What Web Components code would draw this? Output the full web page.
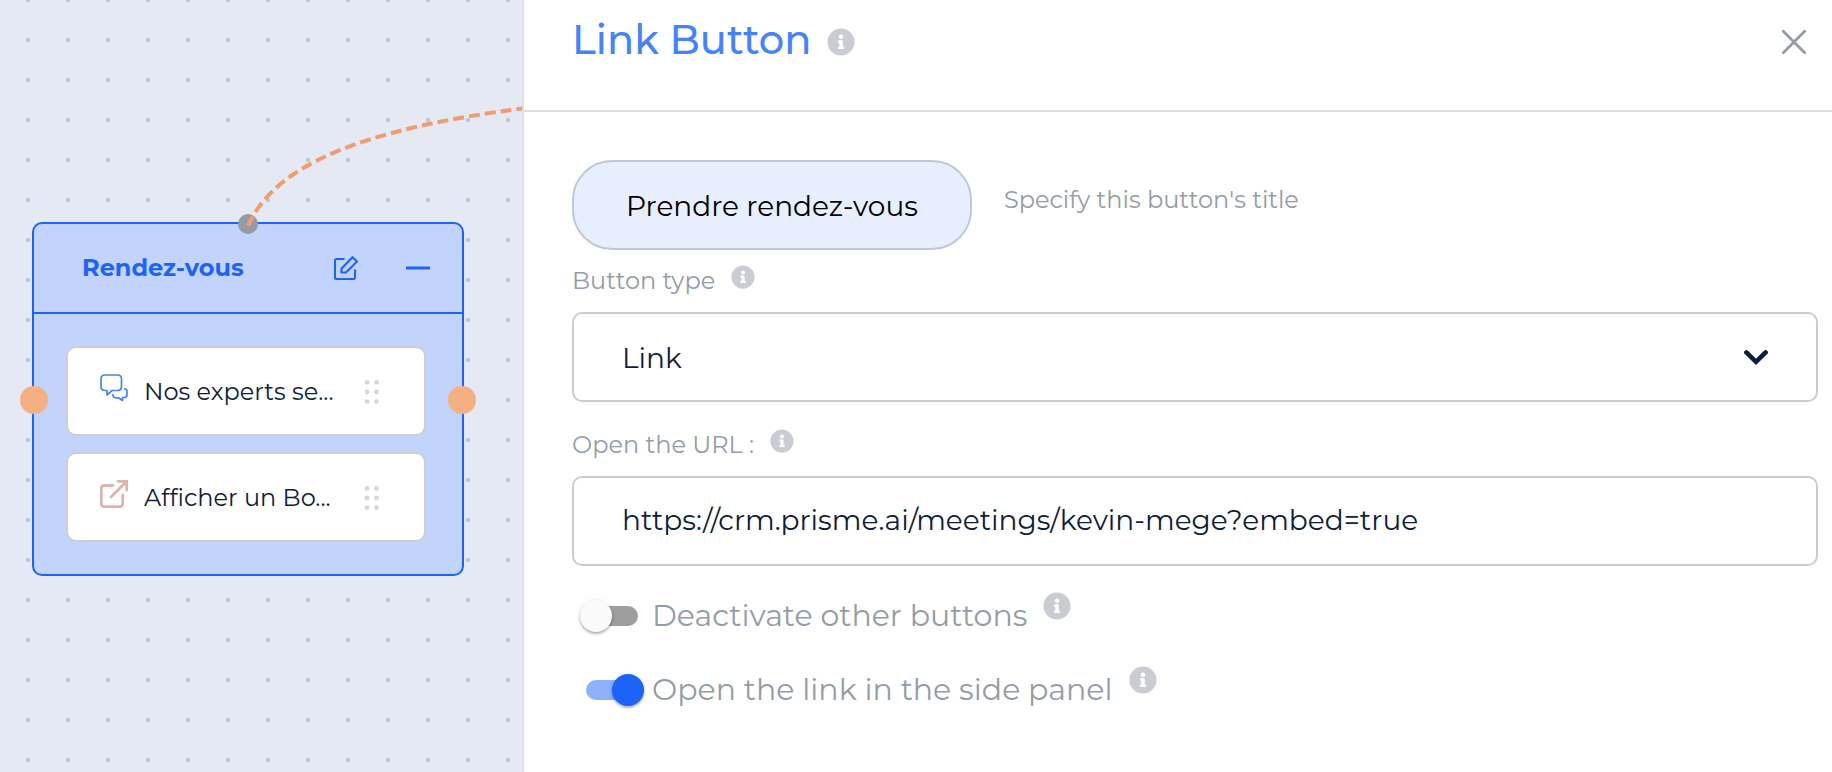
<!DOCTYPE html>
<html lang="en">
<head>
<meta charset="utf-8">
<title>Link Button</title>
<style>
  body { margin: 0; background: #fff; color: #0f1d3a; font-family: Montserrat, Inter, "Noto Sans", sans-serif; }
</style>
</head>
<body>
<flow-editor></flow-editor>

<template id="flow-editor">
  <style>
    :host { display: grid; grid-template-columns: 524px minmax(0, 1fr); min-height: 100vh; }
  </style>
  <flow-canvas>
    <flow-node heading="Rendez-vous">
      <flow-step icon="chat">Nos experts se...</flow-step>
      <flow-step icon="external">Afficher un Bo...</flow-step>
    </flow-node>
  </flow-canvas>
  <settings-panel></settings-panel>
</template>

<template id="flow-canvas">
  <style>
    :host {
      display: block; position: relative; overflow: hidden; box-sizing: border-box;
      border-right: 2px solid #dddfe5;
      background: #e4e9f3 radial-gradient(circle, #bdc2ce 1.5px, transparent 2.5px) 8px -20px / 40px 40px;
    }
    ::slotted(flow-node) { position: absolute; left: 32px; top: 222px; }
    svg { position: absolute; left: 0; top: 0; pointer-events: none; }
  </style>
  <slot></slot>
  <svg width="524" height="300" fill="none" aria-hidden="true">
    <path d="M248 226C274 166 360 129 526 108" stroke="#f19b70" stroke-width="4" stroke-dasharray="11 5"/>
  </svg>
</template>

<template id="flow-node">
  <style>
    :host { display: block; box-sizing: border-box; width: 432px; border: 2px solid #1d63f8; border-radius: 10px; background: #c2d4fc; }
    header { display: flex; align-items: center; height: 88px; padding: 0 32px 0 48px; border-bottom: 2px solid #1d63f8; color: #1d63f8; }
    h2 { flex: 1; margin: 0; font-size: 24px; line-height: 32px; font-weight: 700; }
    button { display: flex; margin: 0; padding: 0; border: 0; background: none; color: inherit; }
    button + button { margin-left: 48px; }
    .steps { display: grid; gap: 16px; padding: 32px 36px 32px 32px; }
    .port { position: absolute; width: 28px; height: 28px; border-radius: 50%; background: #f4af82; top: 162px; }
    .left { left: -14px; }
    .right { right: -14px; }
    .top { width: 20px; height: 20px; top: -10px; left: 204px; background: #949ba6; }
  </style>
  <header>
    <h2></h2>
    <button type="button" aria-label="Edit"><ui-icon name="edit" size="24"></ui-icon></button>
    <button type="button" aria-label="Collapse"><ui-icon name="minus" size="24"></ui-icon></button>
  </header>
  <div class="steps"><slot></slot></div>
  <span class="port top"></span>
  <span class="port left"></span>
  <span class="port right"></span>
</template>

<template id="flow-step">
  <style>
    :host { display: flex; align-items: center; box-sizing: border-box; height: 90px; padding: 2px 44px 0 32px; border: 2px solid #cccfd3; border-radius: 10px; background: #fff; }
    .icon { margin-bottom: 8px; }
    .text { flex: 1; margin-left: 16px; font-size: 24px; line-height: 32px; white-space: nowrap; font-variant-ligatures: none; }
  </style>
  <ui-icon class="icon" size="28"></ui-icon>
  <span class="text"><slot></slot></span>
  <ui-icon name="grip" size="24"></ui-icon>
</template>

<template id="settings-panel">
  <style>
    :host { display: block; background: #fff; }
    header { display: flex; align-items: center; height: 84px; padding: 0 26px 26px 48px; border-bottom: 2px solid #dcdee4; }
    h1 { margin: 0 16px 0 0; padding-bottom: 4px; color: #4583fb; font-size: 40px; line-height: 48px; font-weight: 500; }
    .close { display: flex; margin: 0 0 0 auto; padding: 0; border: 0; background: none; color: #929ba7; }
    form { padding: 48px 14px 48px 48px; }
    .title { display: flex; align-items: center; }
    .title label { margin: 0 0 10px 32px; font-size: 24px; line-height: 32px; color: #949ca8; }
    input, select { display: block; box-sizing: border-box; height: 90px; margin: 0; font: 400 28px/36px Montserrat, Inter, "Noto Sans", sans-serif; }
    .title input { width: 400px; padding: 2px 48px 0; border: 2px solid #c0c8d6; border-radius: 40px; background: #e7effe; color: #000; text-align: center; }
    .box { width: 100%; padding: 0 48px; border: 2px solid #c9cdd3; border-radius: 10px; background: #fff; color: #0f1d3a; appearance: none; }
    select.box { padding-top: 2px; }
    input.box { padding-bottom: 2px; }
    form-field { margin-top: 15px; }
    form-field + form-field { margin-top: 27px; }
    toggle-row { margin-top: 26px; }
    .select { position: relative; }
    .select ui-icon { position: absolute; right: 50px; top: 34px; color: #0f1d3a; pointer-events: none; }
  </style>
  <header>
    <h1>Link Button</h1>
    <ui-icon name="info" size="28"></ui-icon>
    <button class="close" type="button" aria-label="Close"><ui-icon name="close" size="24"></ui-icon></button>
  </header>
  <form>
    <div class="title">
      <input id="title" type="text" value="Prendre rendez-vous">
      <label for="title">Specify this button's title</label>
    </div>
    <form-field>
      <label slot="label" for="type">Button type</label>
      <div class="select">
        <select id="type" class="box"><option>Link</option></select>
        <ui-icon name="chevron" size="24"></ui-icon>
      </div>
    </form-field>
    <form-field>
      <label slot="label" for="url">Open the URL :</label>
      <input id="url" class="box" type="text" value="https://crm.prisme.ai/meetings/kevin-mege?embed=true">
    </form-field>
    <toggle-row label="Deactivate other buttons"></toggle-row>
    <toggle-row label="Open the link in the side panel" checked></toggle-row>
  </form>
</template>

<template id="form-field">
  <style>
    :host { display: block; }
    .label { display: flex; align-items: flex-start; gap: 16px; margin-bottom: 15px; font-size: 24px; line-height: 32px; color: #949ca8; }
  </style>
  <div class="label"><slot name="label"></slot><ui-icon name="info" size="24"></ui-icon></div>
  <slot></slot>
</template>

<template id="toggle-row">
  <style>
    :host { display: flex; align-items: flex-start; gap: 16px; }
    label { display: flex; align-items: center; gap: 8px; padding-left: 8px; font-size: 30px; line-height: 48px; color: #949ca8; }
    input { appearance: none; position: relative; width: 64px; height: 32px; margin: 0; }
    input::before { content: ""; position: absolute; left: 6px; top: 6px; width: 52px; height: 20px; border-radius: 10px; background: #9e9e9e; }
    input::after { content: ""; position: absolute; left: 0; top: 0; width: 32px; height: 32px; border-radius: 50%; background: #fafafa; box-shadow: 0 2px 2px rgba(0,0,0,.2), 0 1px 4px rgba(0,0,0,.18); }
    input:checked::before { background: #8fb0fb; }
    input:checked::after { left: 32px; background: #1d63f8; }
  </style>
  <label><input type="checkbox"><span></span></label>
  <ui-icon name="info" size="28"></ui-icon>
</template>

<script>
  const ICONS = {
    info: ['0 0 512 512', '<path fill="#c9ccd2" d="M256 8C119.043 8 8 119.083 8 256c0 136.997 111.043 248 248 248s248-111.003 248-248C504 119.083 392.957 8 256 8zm0 110c23.196 0 42 18.804 42 42s-18.804 42-42 42-42-18.804-42-42 18.804-42 42-42zm56 254c0 6.627-5.373 12-12 12h-88c-6.627 0-12-5.373-12-12v-24c0-6.627 5.373-12 12-12h12v-64h-12c-6.627 0-12-5.373-12-12v-24c0-6.627 5.373-12 12-12h64c6.627 0 12 5.373 12 12v100h12c6.627 0 12 5.373 12 12v24z"/>'],
    close: ['0 0 24 24', '<path d="M1.3 1.3l21.4 21.4M22.7 1.3L1.3 22.7" stroke="currentColor" stroke-width="2.8" stroke-linecap="round"/>'],
    chevron: ['0 0 24 24', '<path d="M2.4 6.4l9.6 9.4 9.6-9.4" stroke="currentColor" stroke-width="4.6" stroke-linecap="round" stroke-linejoin="miter"/>'],
    minus: ['0 0 24 24', '<path d="M0 12h24" stroke="currentColor" stroke-width="3"/>'],
    edit: ['0 0 24 24', '<path d="M10.5 3H2.5Q1 3 1 4.500V21.500Q1 23 2.500 23H19.500Q21 23 21 21.500V13.500M7.500 16.500V12.500L18.500 1.200L23 5.600L12 16.500Z" stroke="currentColor" stroke-width="2.100" stroke-linejoin="round"/>'],
    chat: ['0 0 28 28', '<path d="M5 1H17.500Q21.500 1 21.500 5V12.500Q21.500 16.500 17.500 16.500H12L7 21V16.500H5Q1 16.500 1 12.500V5Q1 1 5 1ZM24 14.500Q27 14.800 27 17.500V20.500Q27 23.500 24.500 23.500H22.500V26.500L18.500 23.800H16Q12.800 23.800 12.800 20" stroke="#4583f5" stroke-width="1.7" stroke-linejoin="round"/>'],
    external: ['0 0 28 28', '<path d="M13 5.500H4.500Q1.300 5.500 1.300 8.500V23.500Q1.300 26.700 4.500 26.700H19.500Q22.700 26.700 22.700 23.500V15M11 17L26.500 1.500M18 1.300H26.700V10" stroke="#dfb3ae" stroke-width="2.8" stroke-linecap="round" stroke-linejoin="miter"/>'],
    grip: ['0 0 24 24', '<g fill="#d6d6d6"><circle cx="11" cy="2.400" r="2.400"/><circle cx="20.500" cy="2.400" r="2.400"/><circle cx="11" cy="12" r="2.400"/><circle cx="20.500" cy="12" r="2.400"/><circle cx="11" cy="21.600" r="2.400"/><circle cx="20.500" cy="21.600" r="2.400"/></g>']
  };

  class TemplateElement extends HTMLElement {
    constructor() {
      super();
      const template = document.getElementById(this.localName);
      this.attachShadow({ mode: 'open' }).append(template.content.cloneNode(true));
    }
  }

  customElements.define('ui-icon', class extends HTMLElement {
    constructor() { super(); this.attachShadow({ mode: 'open' }); }
    static get observedAttributes() { return ['name']; }
    connectedCallback() { this.draw(); }
    attributeChangedCallback() { this.draw(); }
    draw() {
      const icon = ICONS[this.getAttribute('name')];
      if (!icon) return;
      const size = this.getAttribute('size');
      this.shadowRoot.innerHTML = `<style>:host { display: block; flex: none; } svg { display: block; }</style>
        <svg width="${size}" height="${size}" viewBox="${icon[0]}" fill="none" aria-hidden="true">${icon[1]}</svg>`;
    }
  });
  customElements.define('flow-step', class extends TemplateElement {
    connectedCallback() { this.shadowRoot.querySelector('.icon').setAttribute('name', this.getAttribute('icon')); }
  });
  customElements.define('flow-node', class extends TemplateElement {
    connectedCallback() { this.shadowRoot.querySelector('h2').textContent = this.getAttribute('heading'); }
  });
  customElements.define('flow-canvas', class extends TemplateElement {});
  customElements.define('form-field', class extends TemplateElement {});
  customElements.define('toggle-row', class extends TemplateElement {
    connectedCallback() {
      this.shadowRoot.querySelector('span').textContent = this.getAttribute('label');
      this.shadowRoot.querySelector('input').checked = this.hasAttribute('checked');
    }
  });
  customElements.define('settings-panel', class extends TemplateElement {});
  customElements.define('flow-editor', class extends TemplateElement {});
</script>
</body>
</html>
